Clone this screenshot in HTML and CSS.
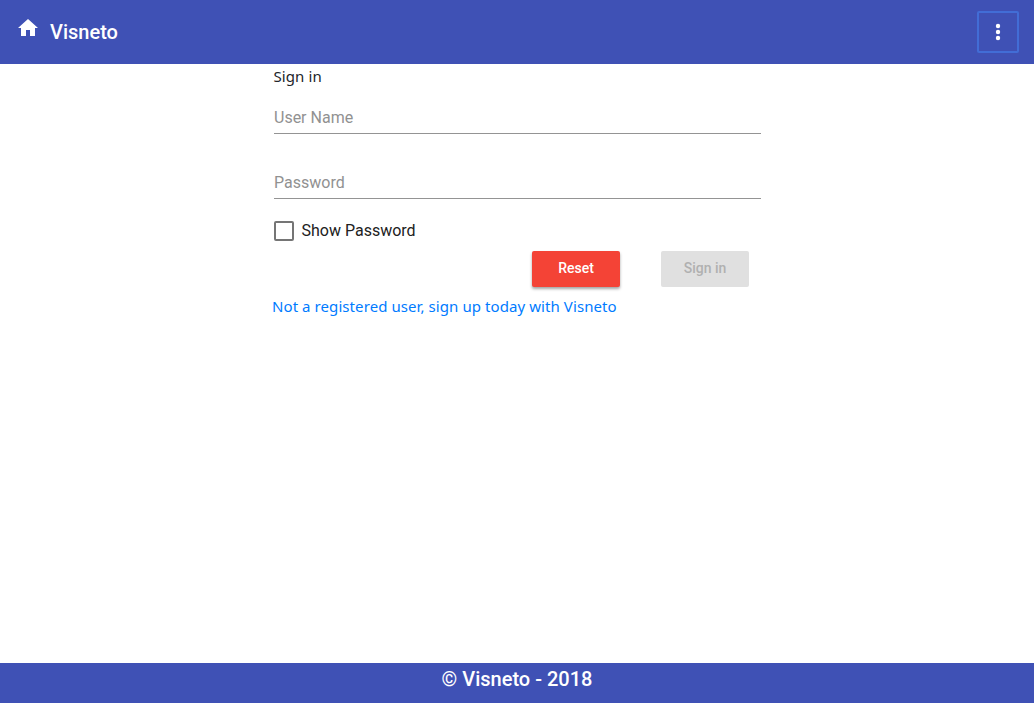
FILE: index.html
```html
<!DOCTYPE html>
<html lang="en">
<head>
<meta charset="utf-8">
<title>Visneto</title>
<link rel="stylesheet" href="styles.css">
</head>
<body>
<header class="toolbar">
  <a class="brand" href="#">
    <svg class="home-icon" viewBox="0 0 24 24"><path d="M10 20v-6h4v6h5v-8h3L12 3 2 12h3v8z"/></svg>
    <span class="brand-name">Visneto</span>
  </a>
  <button class="menu-button" type="button" aria-label="Menu">
    <svg class="menu-icon" viewBox="0 0 24 24"><circle cx="12" cy="6" r="2.200"/><circle cx="12" cy="12" r="2.200"/><circle cx="12" cy="18" r="2.200"/></svg>
  </button>
</header>
<main class="content">
  <form class="signin">
    <div class="title"><span class="title-text">Sign in</span></div>
    <label class="field"><span class="field-label">User Name</span></label>
    <label class="field"><span class="field-label">Password</span></label>
    <div class="check-row"><span class="checkbox"></span><span class="check-label">Show Password</span></div>
    <div class="actions">
      <button class="button reset" type="button">Reset</button>
      <button class="button submit" type="button" disabled>Sign in</button>
    </div>
    <a class="signup" href="#"><span class="signup-text">Not a registered user, sign up today with Visneto</span></a>
  </form>
</main>
<footer class="footer"><span class="footer-text">© Visneto - 2018</span></footer>
</body>
</html>
```
FILE: styles.css
```css
* { box-sizing: border-box; }
body { margin: 0; height: 703px; display: flex; flex-direction: column; background: #fff; font: 16px/24px Roboto, sans-serif; color: #212529; }
.toolbar { height: 64px; background: #3f51b5; color: #fff; display: flex; justify-content: space-between; align-items: center; padding: 0 15px 0 16px; }
.brand { display: flex; align-items: center; gap: 10px; color: #fff; text-decoration: none; }
.home-icon { width: 24px; height: 24px; fill: #fff; margin-bottom: 8px; }
.brand-name { font-size: 20px; font-weight: 500; line-height: 32px; }
.menu-button { width: 42px; height: 42px; padding: 0; border: 2px solid #426dd6; border-radius: 2px; background: transparent; display: flex; align-items: center; justify-content: center; }
.menu-icon { width: 24px; height: 24px; fill: #fff; }
.content { flex: 1; padding-left: 272px; }
.signin { width: 489px; display: flex; flex-direction: column; }
.title { height: 24px; padding-left: 1.5px; font-family: "Noto Sans", sans-serif; }
.title-text { font-size: 15px; letter-spacing: .09px; }
.field { height: 46px; margin-left: 2px; padding-top: 18px; border-bottom: 1px solid #949494; color: #919191; }
.field + .field { margin-top: 19px; }
.check-row { height: 24px; display: flex; align-items: center; gap: 7.5px; margin: 20px 0 0 2px; color: #212121; }
.checkbox { width: 20px; height: 20px; border: 2px solid #757575; border-radius: 2px; }
.actions { display: flex; gap: 41px; margin: 8px 0 0 260px; }
.button { width: 88px; height: 36px; padding: 0 0 2px; border: 0; border-radius: 2px; font: 500 14px/34px Roboto, sans-serif; }
.reset { background: #f44336; color: #fff; box-shadow: 0 2px 3px rgba(0,0,0,.36); }
.submit { background: #e0e0e0; color: #b0b0b0; }
.signup { height: 24px; margin-top: 7px; color: #007bff; text-decoration: none; font-family: "Noto Sans", sans-serif; white-space: nowrap; }
.signup-text { font-size: 15px; letter-spacing: .08px; }
.footer { height: 40px; background: #3f51b5; color: #fff; text-align: center; font-size: 20px; font-weight: 500; line-height: 32px; }
```
